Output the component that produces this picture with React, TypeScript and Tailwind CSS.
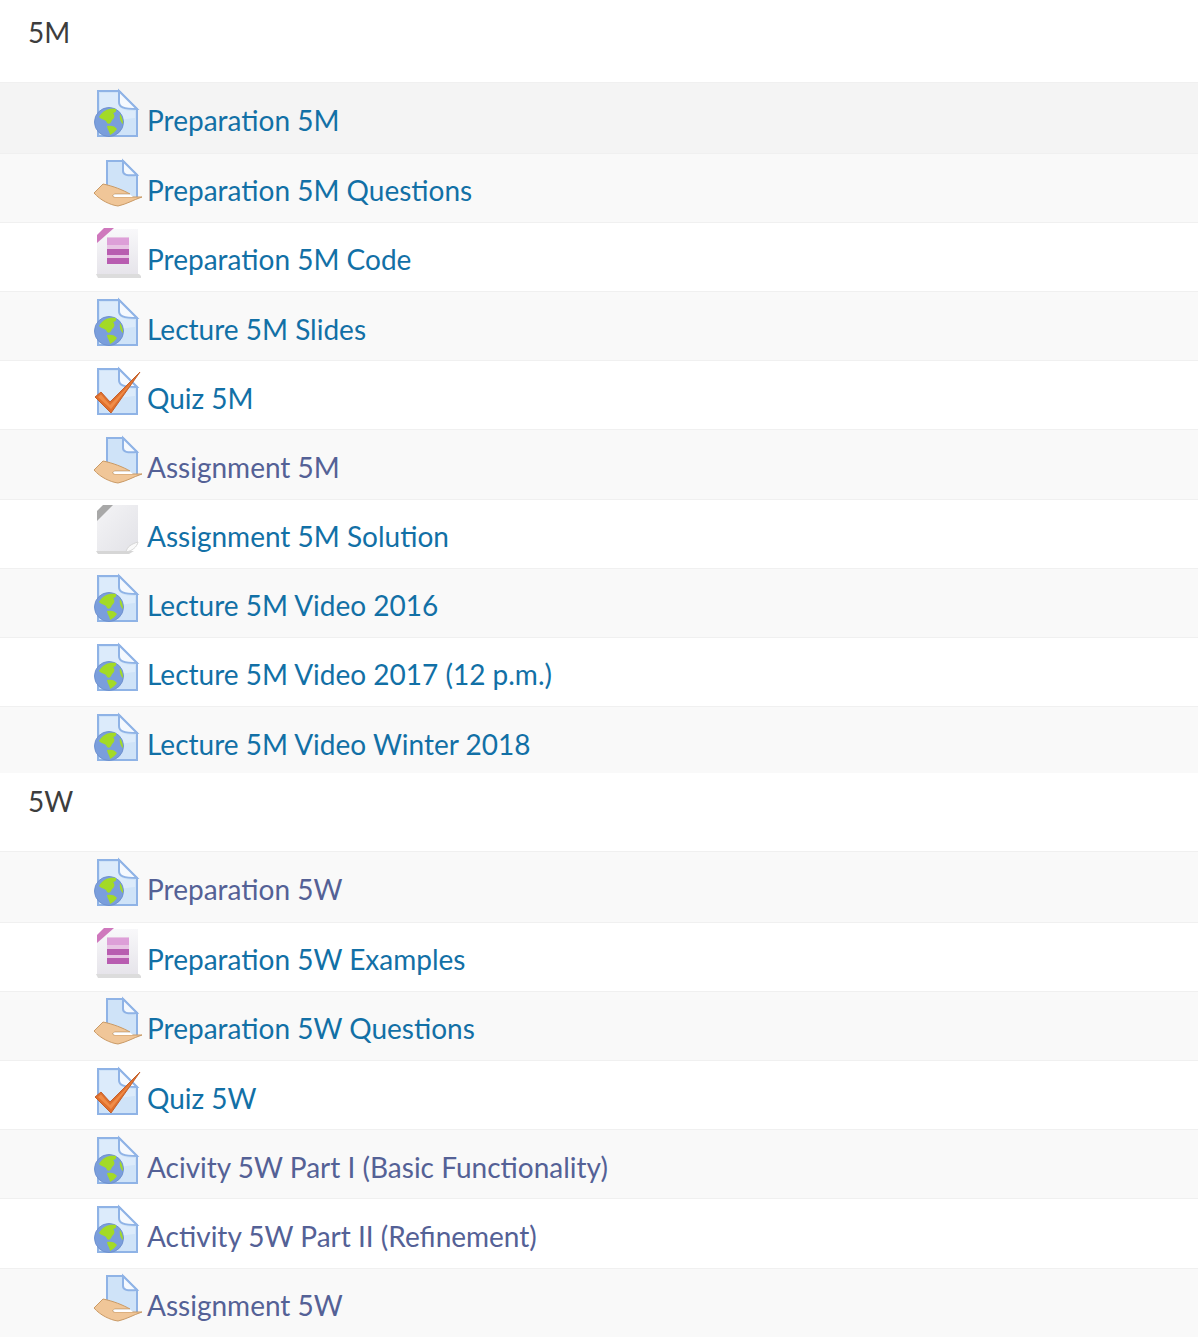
import React from 'react';

type IconKind = 'url' | 'assign' | 'page' | 'quiz' | 'file';

interface Row {
  label: string;
  icon: IconKind;
  visited?: boolean;
  cls: string;
}

const section5M: Row[] = [
  { label: 'Preparation 5M', icon: 'url', cls: 'h-[71px] pt-[5px] bg-[#f4f4f4]' },
  { label: 'Preparation 5M Questions', icon: 'assign', cls: 'h-[69px] pt-[4px] bg-[#f9f9f9]' },
  { label: 'Preparation 5M Code', icon: 'page', cls: 'h-[69px] pt-[4px] bg-white' },
  { label: 'Lecture 5M Slides', icon: 'url', cls: 'h-[69px] pt-[5px] bg-[#f9f9f9]' },
  { label: 'Quiz 5M', icon: 'quiz', cls: 'h-[69px] pt-[5px] bg-white' },
  { label: 'Assignment 5M', icon: 'assign', visited: true, cls: 'h-[70px] pt-[5px] bg-[#f9f9f9]' },
  { label: 'Assignment 5M Solution', icon: 'file', cls: 'h-[69px] pt-[4px] bg-white' },
  { label: 'Lecture 5M Video 2016', icon: 'url', cls: 'h-[69px] pt-[4px] bg-[#f9f9f9]' },
  { label: 'Lecture 5M Video 2017 (12 p.m.)', icon: 'url', cls: 'h-[69px] pt-[4px] bg-white' },
  { label: 'Lecture 5M Video Winter 2018', icon: 'url', cls: 'h-[67px] pt-[5px] bg-[#f9f9f9]' },
];

const section5W: Row[] = [
  { label: 'Preparation 5W', icon: 'url', visited: true, cls: 'h-[71px] pt-[5px] bg-[#f9f9f9]' },
  { label: 'Preparation 5W Examples', icon: 'page', cls: 'h-[69px] pt-[4px] bg-white' },
  { label: 'Preparation 5W Questions', icon: 'assign', cls: 'h-[69px] pt-[4px] bg-[#f9f9f9]' },
  { label: 'Quiz 5W', icon: 'quiz', cls: 'h-[69px] pt-[5px] bg-white' },
  { label: 'Acivity 5W Part I (Basic Functionality)', icon: 'url', visited: true, cls: 'h-[69px] pt-[5px] bg-[#f9f9f9]' },
  { label: 'Activity 5W Part II (Refinement)', icon: 'url', visited: true, cls: 'h-[70px] pt-[5px] bg-white' },
  { label: 'Assignment 5W', icon: 'assign', visited: true, cls: 'h-[69px] pt-[4px] bg-[#f9f9f9]' },
];

// blue sheet with folded corner, shared by the url and quiz icons
const Sheet = () => (
  <>
    <path d="M5 3H26L44 21V48H5Z" fill="#cfe3f8" stroke="#8fb3e6" strokeWidth="2" />
    <path d="M7 5H25V14C25 20 30 23 42 23V30C30 30 15 38 7 32Z" fill="#dcebfb" />
    <path d="M26 3V14C26 19 30 21 44 21L26 3Z" fill="#f5f9fe" stroke="#8fb3e6" strokeWidth="2" />
  </>
);

const ActivityIcon = ({ kind }: { kind: IconKind }) => {
  if (kind === 'url') {
    return (
      <svg width="48" height="54" viewBox="0 0 48 54" className="shrink-0 blur-[0.4px]">
        <Sheet />
        <circle cx="16" cy="34" r="14.5" fill="#7a9edc" stroke="#6f92cf" />
        <path d="M6 29C10 22 16 20 23 21C24 24 21 25 20 25C22 27 22 30 19 32C18 35 16 37 14 35C13 31 9 32 6 29Z" fill="#a3da26" />
        <path d="M14 38C18 37 22 38 24 41C22 44 19 46 17 47C17 44 14 41 14 38Z" fill="#a3da26" />
        <path d="M27 26C29 29 30 32 30 36C28 35 26 30 27 26Z" fill="#a3da26" />
      </svg>
    );
  }
  if (kind === 'assign') {
    return (
      <svg width="49" height="54" viewBox="0 0 49 54" className="-mr-px shrink-0 blur-[0.4px]">
        <path d="M14 3H30L44 17V40H14Z" fill="#cfe3f8" stroke="#8fb3e6" strokeWidth="2" />
        <path d="M30 3V13C30 17 34 18 44 17L30 3Z" fill="#f5f9fe" stroke="#8fb3e6" strokeWidth="2" />
        <path d="M1 35L10 26C20 28 30 32 37 36L22 36C19 37 19 39 22 39H49C40 42 34 46 25 48C17 47 7 42 1 35Z" fill="#f0c698" stroke="#c99a66" />
        <path d="M21 36.5H37L40 39H22C20 38.5 20 37 21 36.5Z" fill="#fff" />
      </svg>
    );
  }
  if (kind === 'page') {
    return (
      <svg width="48" height="54" viewBox="0 0 48 54" className="shrink-0 blur-[0.4px]">
        <defs>
          <linearGradient id="pageShade" x1="0" y1="0" x2="0" y2="1">
            <stop offset="0" stopColor="#f8f8fa" />
            <stop offset="1" stopColor="#e6e4ea" />
          </linearGradient>
        </defs>
        <path d="M4 14L17 2H45V48H4Z" fill="url(#pageShade)" />
        <path d="M3 47H46L50 51H5Z" fill="#dcdcdc" />
        <path d="M4 8L11 1H21L4 16Z" fill="#cf78bd" />
        <path d="M14 10H36V37H14Z" fill="#e8c4e4" />
        <path d="M14 11H36V18H14Z" fill="#dd9fd8" />
        <path d="M14 22H36V28H14ZM14 31H36V37H14Z" fill="#b85db0" />
      </svg>
    );
  }
  if (kind === 'quiz') {
    return (
      <svg width="48" height="54" viewBox="0 0 48 54" className="shrink-0 blur-[0.3px]">
        <Sheet />
        <path d="M2 31L8 26L17 36L47 6L18 47Z" fill="#e0702e" stroke="#c4602a" />
        <path d="M5 31L8 28.5L17 39L40 15L18 43Z" fill="#f08c48" />
      </svg>
    );
  }
  return (
    <svg width="48" height="54" viewBox="0 0 48 54" className="shrink-0 blur-[0.5px]">
      <defs>
        <linearGradient id="fileShade" x1="0" y1="0" x2="1" y2="1">
          <stop offset="0" stopColor="#f4f4f6" />
          <stop offset="1" stopColor="#e2e2e7" />
        </linearGradient>
      </defs>
      <path d="M4 14L17 1H45V38L33 48H4Z" fill="url(#fileShade)" />
      <path d="M3 47H33L41 47L36 50H5Z" fill="#d6d6d6" />
      <path d="M4 7L10 1H20L4 17Z" fill="#a8a8a8" />
      <path d="M33 48C34 43 38 40 45 38C44 43 39 47 33 48Z" fill="#fafafa" stroke="#d5d5d5" />
    </svg>
  );
};

const ActivityRow = ({ row }: { row: Row }) => (
  <li className={`flex items-start border-t border-[#f0f0f0] pl-[93px] ${row.cls}`}>
    <ActivityIcon kind={row.icon} />
    <a
      href="#"
      className={`ml-[6px] mt-[12px] text-[28px] leading-[40px] whitespace-nowrap ${
        row.visited ? 'text-[#546196]' : 'text-[#1270a6]'
      }`}
    >
      {row.label}
    </a>
  </li>
);

export default function App() {
  return (
    <div className="h-[1338px] w-[1198px] overflow-hidden bg-white font-['Lato',sans-serif]">
      <div className="h-[82px] pl-[28px] pt-[12px] text-[28px] leading-[40px] text-[#3d3d3d]">5M</div>
      <ul>
        {section5M.map((row) => (
          <ActivityRow key={row.label} row={row} />
        ))}
      </ul>
      <div className="h-[78px] pl-[28px] pt-[8px] text-[28px] leading-[40px] text-[#3d3d3d]">5W</div>
      <ul>
        {section5W.map((row) => (
          <ActivityRow key={row.label} row={row} />
        ))}
      </ul>
    </div>
  );
}
